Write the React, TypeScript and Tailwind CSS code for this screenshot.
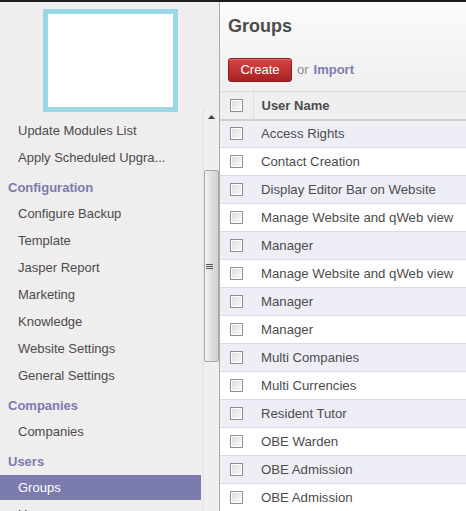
import React from "react";

type MenuEntry = { label: string; header?: boolean; active?: boolean };

const menu: MenuEntry[] = [
  { label: "Update Modules List" },
  { label: "Apply Scheduled Upgra..." },
  { label: "Configuration", header: true },
  { label: "Configure Backup" },
  { label: "Template" },
  { label: "Jasper Report" },
  { label: "Marketing" },
  { label: "Knowledge" },
  { label: "Website Settings" },
  { label: "General Settings" },
  { label: "Companies", header: true },
  { label: "Companies" },
  { label: "Users", header: true },
  { label: "Groups", active: true },
  { label: "Users" },
];

const groups = [
  "Access Rights",
  "Contact Creation",
  "Display Editor Bar on Website",
  "Manage Website and qWeb view",
  "Manager",
  "Manage Website and qWeb view",
  "Manager",
  "Manager",
  "Multi Companies",
  "Multi Currencies",
  "Resident Tutor",
  "OBE Warden",
  "OBE Admission",
  "OBE Admission",
];

function Checkbox() {
  return (
    <span className="block h-[13px] w-[13px] border border-[#8f8f8f] bg-gradient-to-br from-[#dcdcdc] to-[#fbfbfb] shadow-[inset_0_0_0_1px_#fff]" />
  );
}

function Scrollbar() {
  return (
    <div className="flex w-[17px] flex-col border-l border-[#e2e2e2] bg-[#efefef]">
      <div className="flex h-[18px] items-center justify-center">
        <svg width="7" height="4" viewBox="0 0 7 4" aria-hidden="true">
          <path d="M0 4 L3.5 0 L7 4 Z" fill="#404040" />
        </svg>
      </div>
      <div className="mt-[44px] flex h-[192px] w-[15px] items-center justify-center rounded-[2px] border border-[#a7a7a7] bg-gradient-to-r from-[#f4f4f4] via-[#dedede] to-[#d2d2d2]">
        <div className="flex flex-col gap-[1px] -ml-[3px]">
          <span className="block h-px w-[7px] bg-[#555]" />
          <span className="block h-px w-[7px] bg-[#555]" />
          <span className="block h-px w-[7px] bg-[#555]" />
        </div>
      </div>
    </div>
  );
}

export default function App() {
  return (
    <div
      className="flex h-[511px] w-[466px] overflow-hidden border-t-2 border-[#1c1c1c] bg-white text-[13px] text-[#4c4c4c]"
      style={{ fontFamily: '"Liberation Sans", Arial, sans-serif' }}
    >
      {/* sidebar */}
      <aside className="flex w-[220px] shrink-0 flex-col border-r border-[#a8a8a8] bg-[#efeded]">
        <div className="relative z-10 h-[106px] shrink-0">
          <div className="ml-[43px] mt-[7px] h-[103px] w-[135px] border-[5px] border-[#9ad8e6] bg-white" />
        </div>
        <div className="flex min-h-0 flex-1">
          <nav className="flex w-[201px] shrink-0 flex-col overflow-hidden pt-[9px]">
            {menu.map((m, i) =>
              m.header ? (
                <div
                  key={i}
                  className="h-[29px] shrink-0 pl-[8px] pt-[8px] font-bold leading-[17px] text-[#7c7bad]"
                >
                  {m.label}
                </div>
              ) : (
                <div
                  key={i}
                  className={
                    m.active
                      ? "my-px flex h-[25px] shrink-0 items-center bg-[#7c7bad] pl-[18px] text-white"
                      : "my-px flex h-[25px] shrink-0 items-center pl-[18px]"
                  }
                >
                  {m.label}
                </div>
              )
            )}
          </nav>
          <div className="w-[2px]" />
          <Scrollbar />
        </div>
      </aside>

      {/* main */}
      <main className="min-w-0 flex-1">
        <div className="h-[89px] bg-gradient-to-b from-[#fbfbfb] to-[#efefef] px-[8px]">
          <h1 className="pt-[13px] text-[18px] font-bold leading-[22px] text-[#4c4c4c]">
            Groups
          </h1>
          <div className="mt-[21px] flex items-center gap-[5px]">
            <button className="h-[24px] w-[64px] rounded-[3px] border border-[#8b1a1a] bg-gradient-to-b from-[#d64545] to-[#a82222] text-[13px] text-white shadow-[inset_0_1px_0_rgba(255,255,255,0.25)]">
              Create
            </button>
            <span className="text-[#8a8a8a]">or</span>
            <span className="font-bold text-[#7c7bad]">Import</span>
          </div>
        </div>

        <table className="w-full border-collapse">
          <thead>
            <tr className="h-[28px] border-t border-b-2 border-t-[#dcdcdc] border-b-[#cfcfcf] bg-[#efefef]">
              <th className="w-[33px] border-r border-[#dedede] pl-[10px] text-left align-middle">
                <Checkbox />
              </th>
              <th className="pl-[8px] text-left font-bold">User Name</th>
            </tr>
          </thead>
          <tbody>
            {groups.map((g, i) => (
              <tr
                key={i}
                className={
                  i % 2 === 0
                    ? "h-[28px] border-b border-[#dcdcdc] bg-[#eeeef6]"
                    : "h-[28px] border-b border-[#dcdcdc] bg-white"
                }
              >
                <td className="pl-[10px] align-middle">
                  <Checkbox />
                </td>
                <td className="whitespace-nowrap pl-[8px] text-[13.2px]">{g}</td>
              </tr>
            ))}
          </tbody>
        </table>
      </main>
    </div>
  );
}
